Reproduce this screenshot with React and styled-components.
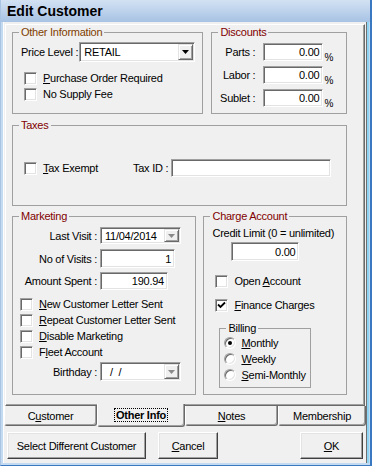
import React from "react";
import styled, { createGlobalStyle, css } from "styled-components";

const GlobalStyle = createGlobalStyle`
  html, body {
    margin: 0;
    padding: 0;
    background: #ffffff;
  }
  body {
    font-family: "Liberation Sans", Arial, sans-serif;
    font-size: 11px;
    letter-spacing: -0.25px;
    color: #000;
  }
  * {
    box-sizing: border-box;
  }
`;

const App = () => {
  return (
    <>
      <GlobalStyle />
      <Window>
        <TitleBar>Edit Customer</TitleBar>
        <Body>
          <TabPage>
            <GroupRow $gap={8}>
              <Group $w={192} $h={88}>
                <Legend $color="#804000">Other Information</Legend>
                <GroupBody $pt={3} $pl={8}>
                  <InlineRow $gap={1}>
                    <span>Price Level :</span>
                    <Field $w={116} $h={20}>
                      <FieldText>RETAIL</FieldText>
                      <DropButton>
                        <Arrow color="#000" />
                      </DropButton>
                    </Field>
                  </InlineRow>
                  <CheckList $mt={8} $pl={3}>
                    <CheckRow>
                      <CheckBox />
                      <span>
                        <Key>P</Key>urchase Order Required
                      </span>
                    </CheckRow>
                    <CheckRow>
                      <CheckBox />
                      <span>No Supply Fee</span>
                    </CheckRow>
                  </CheckList>
                </GroupBody>
              </Group>

              <Group $w={136} $h={88}>
                <Legend $color="#800000">Discounts</Legend>
                <GroupBody $pt={4} $pl={0}>
                  <DiscountGrid>
                    {["Parts :", "Labor :", "Sublet :"].map((label) => (
                      <React.Fragment key={label}>
                        <RightLabel>{label}</RightLabel>
                        <Field $w={60} $right>
                          <FieldText>0.00</FieldText>
                        </Field>
                        <Percent>%</Percent>
                      </React.Fragment>
                    ))}
                  </DiscountGrid>
                </GroupBody>
              </Group>
            </GroupRow>

            <Group $h={87} $mt={5}>
              <Legend $color="#800000">Taxes</Legend>
              <GroupBody $pt={27} $pl={11}>
                <InlineRow $gap={3}>
                  <CheckRow $w={106}>
                    <CheckBox />
                    <span>
                      <Key>T</Key>ax Exempt
                    </span>
                  </CheckRow>
                  <span>Tax ID :</span>
                  <Field $w={160} />
                </InlineRow>
              </GroupBody>
            </Group>

            <GroupRow $gap={7} $mt={4}>
              <Group $w={185} $h={185}>
                <Legend $color="#800000">Marketing</Legend>
                <GroupBody $pt={4} $pl={0}>
                  <FormRow>
                    <FormLabel>Last Visit :</FormLabel>
                    <Field $w={81} $h={17}>
                      <FieldText>11/04/2014</FieldText>
                      <DropButton>
                        <Arrow color="#8a8a8a" />
                      </DropButton>
                    </Field>
                  </FormRow>
                  <FormRow $mt={5}>
                    <FormLabel>No of Visits :</FormLabel>
                    <Field $w={75} $h={19} $right>
                      <FieldText>1</FieldText>
                    </Field>
                  </FormRow>
                  <FormRow $mt={4}>
                    <FormLabel>Amount Spent :</FormLabel>
                    <Field $w={68} $right>
                      <FieldText>190.94</FieldText>
                    </Field>
                  </FormRow>
                  <CheckList $mt={6} $pl={7}>
                    <CheckRow>
                      <CheckBox />
                      <span>
                        <Key>N</Key>ew Customer Letter Sent
                      </span>
                    </CheckRow>
                    <CheckRow>
                      <CheckBox />
                      <span>
                        <Key>R</Key>epeat Customer Letter Sent
                      </span>
                    </CheckRow>
                    <CheckRow>
                      <CheckBox />
                      <span>
                        <Key>D</Key>isable Marketing
                      </span>
                    </CheckRow>
                    <CheckRow>
                      <CheckBox />
                      <span>
                        F<Key>l</Key>eet Account
                      </span>
                    </CheckRow>
                  </CheckList>
                  <FormRow $mt={2}>
                    <FormLabel>Birthday :</FormLabel>
                    <Field $w={81} $h={19}>
                      <FieldText $indent={7}>/&nbsp;&nbsp;/</FieldText>
                      <DropButton>
                        <Arrow color="#8a8a8a" />
                      </DropButton>
                    </Field>
                  </FormRow>
                </GroupBody>
              </Group>

              <Group $w={144} $h={185}>
                <Legend $color="#800000">Charge Account</Legend>
                <GroupBody $pt={4} $pl={8}>
                  <LineText>Credit Limit (0 = unlimited)</LineText>
                  <Field $w={68} $h={19} $right $ml={19} $mt={2}>
                    <FieldText>0.00</FieldText>
                  </Field>
                  <CheckList $mt={12} $pl={3} $gap={8}>
                    <CheckRow>
                      <CheckBox />
                      <span>
                        Open <Key>A</Key>ccount
                      </span>
                    </CheckRow>
                    <CheckRow>
                      <CheckBox $checked />
                      <span>
                        <Key>F</Key>inance Charges
                      </span>
                    </CheckRow>
                  </CheckList>
                  <Group $w={92} $h={66} $mt={9} $ml={7}>
                    <Legend $color="#000">Billing</Legend>
                    <GroupBody $pt={0} $pl={4}>
                      <RadioRow>
                        <Radio $on />
                        <span>
                          <Key>M</Key>onthly
                        </span>
                      </RadioRow>
                      <RadioRow>
                        <Radio />
                        <span>
                          <Key>W</Key>eekly
                        </span>
                      </RadioRow>
                      <RadioRow>
                        <Radio />
                        <span>
                          <Key>S</Key>emi-Monthly
                        </span>
                      </RadioRow>
                    </GroupBody>
                  </Group>
                </GroupBody>
              </Group>
            </GroupRow>
          </TabPage>

          <TabStrip>
            <Tab $w={93}>
              <span>
                C<Key>u</Key>stomer
              </span>
            </Tab>
            <Tab $w={88} $active>
              <Focus>Other Info</Focus>
            </Tab>
            <Tab $w={93}>
              <span>
                <Key>N</Key>otes
              </span>
            </Tab>
            <Tab $w={88}>
              <span>Membership</span>
            </Tab>
          </TabStrip>

          <ButtonRow>
            <Button $w={139}>Select Different Customer</Button>
            <Button $w={60} $ml={12}>
              <span>
                <Key>C</Key>ancel
              </span>
            </Button>
            <Button $w={63} $ml="auto">
              <span>
                <Key>O</Key>K
              </span>
            </Button>
          </ButtonRow>
        </Body>
      </Window>
    </>
  );
};

const Arrow = ({ color }) => (
  <svg width="7" height="4" viewBox="0 0 7 4">
    <path d="M0 0 H7 L3.5 4 Z" fill={color} />
  </svg>
);

// window frame
const Window = styled.div`
  width: 372px;
  height: 466px;
  display: flex;
  flex-direction: column;
  background: #c3daf0;
  border-left: 1px solid #a9c4e3;
  border-right: 2px solid #3a78c2;
  border-bottom: 1px solid #3a78c2;
  overflow: hidden;
`;

const TitleBar = styled.div`
  flex: none;
  height: 22px;
  display: flex;
  align-items: center;
  padding-left: 6px;
  margin-right: -2px;
  font-size: 14px;
  font-weight: bold;
  letter-spacing: 0;
  background: linear-gradient(#d3e2f3, #a7c2e4);
`;

const Body = styled.div`
  flex: 1;
  margin: 0 4px 2px 2px;
  display: flex;
  flex-direction: column;
  background: #f0f0f0;
  border-left: 1px solid #fdfdfd;
  box-shadow: 1px 0 0 #6f6f6f, 3px 0 0 #8fd4f2;
`;

const TabPage = styled.div`
  margin: 2px 1px 0 1px;
  height: 382px;
  padding: 1px 17px 0 6px;
  border: 1px solid;
  border-color: #ffffff #696969 #696969 #ffffff;
  box-shadow: inset -1px -1px 0 #a0a0a0;
`;

const GroupRow = styled.div`
  display: flex;
  gap: ${(p) => p.$gap}px;
  margin-top: ${(p) => p.$mt || 0}px;
`;

const Group = styled.fieldset`
  margin: ${(p) => p.$mt || 0}px 0 0 ${(p) => p.$ml || 0}px;
  padding: 0;
  min-width: 0;
  width: ${(p) => (p.$w ? `${p.$w}px` : "auto")};
  height: ${(p) => p.$h}px;
  border: 1px solid #a0a0a0;
`;

const Legend = styled.legend`
  margin-left: 6px;
  padding: 0 2px;
  line-height: 13px;
  font-size: 11px;
  color: ${(p) => p.$color};
`;

const GroupBody = styled.div`
  padding-top: ${(p) => p.$pt}px;
  padding-left: ${(p) => p.$pl}px;
`;

const InlineRow = styled.div`
  display: flex;
  align-items: center;
  gap: ${(p) => p.$gap}px;
  white-space: nowrap;
`;

const Field = styled.div`
  flex: none;
  width: ${(p) => p.$w}px;
  height: ${(p) => p.$h || 18}px;
  margin-left: ${(p) => p.$ml || 0}px;
  margin-top: ${(p) => p.$mt || 0}px;
  display: flex;
  align-items: center;
  justify-content: ${(p) => (p.$right ? "flex-end" : "space-between")};
  padding: 0 0 0 2px;
  background: #ffffff;
  border: 1px solid;
  border-color: #a0a0a0 #ffffff #ffffff #a0a0a0;
  box-shadow: inset 1px 1px 0 #696969, inset -1px -1px 0 #e3e3e3;
  white-space: nowrap;
`;

const FieldText = styled.span`
  padding: 0 3px 0 ${(p) => p.$indent || 2}px;
`;

const DropButton = styled.span`
  align-self: stretch;
  width: 15px;
  margin: 1px;
  display: flex;
  align-items: center;
  justify-content: center;
  background: #f0f0f0;
  border: 1px solid;
  border-color: #e3e3e3 #696969 #696969 #e3e3e3;
  box-shadow: inset 1px 1px 0 #ffffff, inset -1px -1px 0 #a0a0a0;
`;

const CheckList = styled.div`
  display: flex;
  flex-direction: column;
  gap: ${(p) => p.$gap || 0}px;
  margin-top: ${(p) => p.$mt}px;
  padding-left: ${(p) => p.$pl}px;
`;

const CheckRow = styled.div`
  flex: none;
  height: 16px;
  width: ${(p) => (p.$w ? `${p.$w}px` : "auto")};
  display: flex;
  align-items: center;
  gap: 6px;
  white-space: nowrap;
`;

const CheckBoxFrame = styled.span`
  flex: none;
  width: 13px;
  height: 13px;
  display: flex;
  align-items: center;
  justify-content: center;
  background: #ffffff;
  border: 1px solid;
  border-color: #a0a0a0 #ffffff #ffffff #a0a0a0;
  box-shadow: inset 1px 1px 0 #696969, inset -1px -1px 0 #e3e3e3;
`;

const CheckBox = ({ $checked }) => (
  <CheckBoxFrame>
    {$checked && (
      <svg width="9" height="9" viewBox="0 0 9 9">
        <path d="M1 3.5 L3.5 6 L8 1.5" fill="none" stroke="#000" strokeWidth="1.8" />
      </svg>
    )}
  </CheckBoxFrame>
);

const Key = styled.span`
  text-decoration: underline;
  text-underline-offset: 1px;
`;

const DiscountGrid = styled.div`
  display: grid;
  grid-template-columns: 43px 60px auto;
  grid-auto-rows: 18px;
  column-gap: 8px;
  row-gap: 5px;
  align-items: center;
`;

const RightLabel = styled.span`
  text-align: right;
  white-space: nowrap;
`;

const Percent = styled.span`
  margin-left: -7px;
  font-size: 10px;
  align-self: end;
  margin-bottom: -2px;
`;

const FormRow = styled.div`
  display: flex;
  align-items: center;
  gap: 3px;
  margin-top: ${(p) => p.$mt || 0}px;
`;

const FormLabel = styled.span`
  width: 84px;
  text-align: right;
  white-space: nowrap;
`;

const LineText = styled.div`
  line-height: 13px;
  white-space: nowrap;
`;

const RadioRow = styled.div`
  height: 16px;
  display: flex;
  align-items: center;
  gap: 5px;
  white-space: nowrap;
`;

const Radio = styled.span`
  flex: none;
  width: 12px;
  height: 12px;
  border-radius: 50%;
  display: flex;
  align-items: center;
  justify-content: center;
  background: #ffffff;
  border: 1px solid;
  border-color: #a0a0a0 #ffffff #ffffff #a0a0a0;
  box-shadow: inset 1px 1px 0 #696969, inset -1px -1px 0 #e3e3e3;

  &::after {
    content: "";
    width: 4px;
    height: 4px;
    border-radius: 50%;
    background: ${(p) => (p.$on ? "#000" : "transparent")};
  }
`;

const TabStrip = styled.div`
  display: flex;
  height: 20px;
`;

const Tab = styled.div`
  flex: none;
  width: ${(p) => p.$w}px;
  height: 20px;
  display: flex;
  align-items: center;
  justify-content: center;
  border-left: 1px solid #ffffff;
  border-right: 1px solid #696969;
  border-bottom: 1px solid #696969;
  border-radius: 0 0 3px 3px;
  box-shadow: inset -1px -1px 0 #a0a0a0;
  background: #f0f0f0;

  ${(p) =>
    p.$active &&
    css`
      height: 23px;
      margin-top: -2px;
      z-index: 1;
      font-weight: bold;
    `}
`;

const Focus = styled.span`
  padding: 0 1px;
  outline: 1px dotted #000;
`;

const ButtonRow = styled.div`
  display: flex;
  margin-top: 6px;
  padding: 0 3px 0 3px;
`;

const Button = styled.div`
  flex: none;
  width: ${(p) => p.$w}px;
  height: 27px;
  margin-left: ${(p) => (p.$ml === "auto" ? "auto" : `${p.$ml || 0}px`)};
  display: flex;
  align-items: center;
  justify-content: center;
  white-space: nowrap;
  background: #f0f0f0;
  border: 1px solid;
  border-color: #ffffff #404040 #404040 #ffffff;
  box-shadow: inset -1px -1px 0 #a0a0a0, inset 1px 1px 0 #e3e3e3;
`;

export default App;
